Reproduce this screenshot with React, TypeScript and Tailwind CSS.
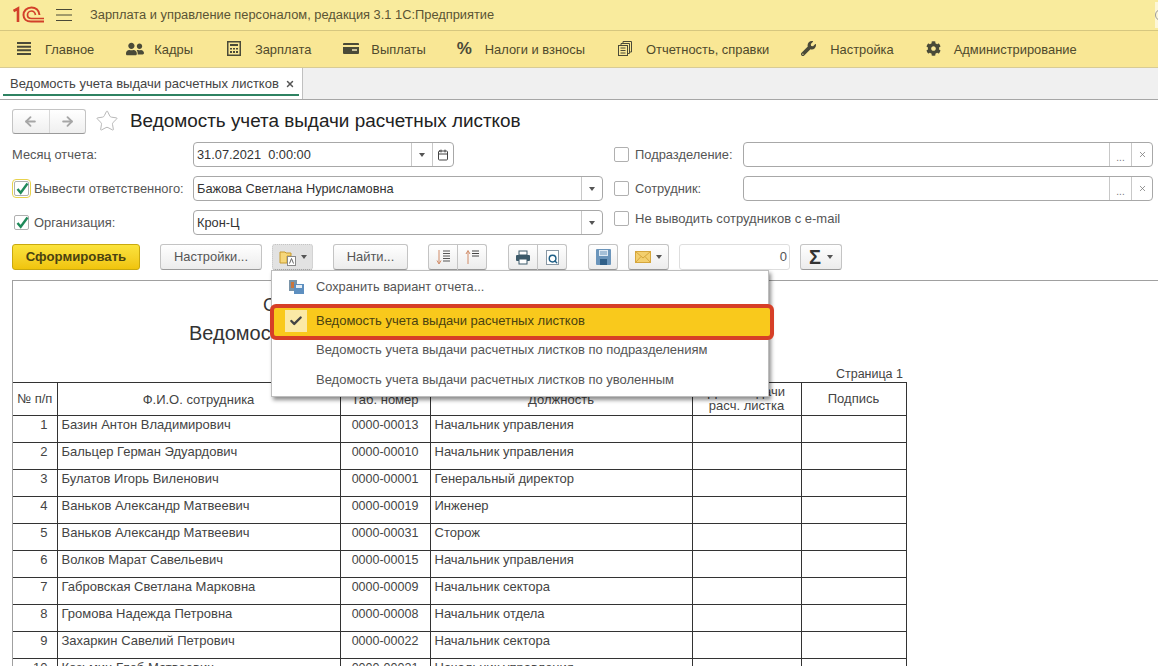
import React from "react";
import { ArrowLeft, ArrowRight, Calendar, Star, Check, X, Search } from "lucide-react";
import { FaUserFriends, FaWrench, FaCog } from "react-icons/fa";

const font = "font-['Liberation_Sans',Arial,sans-serif]";

const Caret = () => <svg width="6" height="4" viewBox="0 0 6 4"><path d="M0 0h6L3 4z" fill="#555" /></svg>;

const navItems: { icon: React.ReactNode; label: string; iconCls: string; itemCls?: string }[] = [
  { icon: <svg width="14" height="13" viewBox="0 0 14 13"><path d="M0 1h14M0 4.700h14M0 8.300h14M0 12h14" stroke="#4a4a38" strokeWidth="2" /></svg>, label: "Главное", iconCls: "w-[28px]" },
  { icon: <FaUserFriends size={18} color="#4a4a38" />, label: "Кадры", iconCls: "w-[28px]", itemCls: "mr-[2px]" },
  { icon: <svg width="14" height="15" viewBox="0 0 14 15"><rect x=".75" y=".75" width="12.500" height="13.500" fill="none" stroke="#4a4a38" strokeWidth="1.500" /><rect x="3" y="3" width="8" height="2" fill="#4a4a38" /><path d="M3 7h2v1.500H3zM6 7h2v1.500H6zM9 7h2v1.500H9zM3 10h2v2H3zM6 10h2v2H6zM9 10h2v2H9z" fill="#4a4a38" /></svg>, label: "Зарплата", iconCls: "w-[28px]" },
  { icon: <svg width="16" height="11" viewBox="0 0 16 11"><rect width="16" height="11" rx="1" fill="#4a4a38" /><rect y="2" width="16" height="2" fill="#f9e795" /><rect x="9" y="6" width="5" height="2" fill="#c8c09a" /></svg>, label: "Выплаты", iconCls: "w-[28px]", itemCls: "mr-[-1px]" },
  { icon: <span className="text-[17px] font-bold text-[#4a4a38]">%</span>, label: "Налоги и взносы", iconCls: "w-[28px]", itemCls: "mr-[1px]" },
  { icon: <svg width="14" height="15" viewBox="0 0 14 15" fill="none" stroke="#4a4a38"><path d="M5 2.500V.5h8.500v10.500H11.500" /><path d="M3 4.500V2.500h8.500v10H9.500" /><rect x=".5" y="4.500" width="9" height="10" /><path d="M2.500 7h5M2.500 9.500h5M2.500 12h5" /></svg>, label: "Отчетность, справки", iconCls: "w-[28px]" },
  { icon: <FaWrench size={15} color="#4a4a38" />, label: "Настройка", iconCls: "w-[29px]" },
  { icon: <FaCog size={15} color="#4a4a38" />, label: "Администрирование", iconCls: "w-[28px]" },
];

const rows = [
  ["1", "Базин Антон Владимирович", "0000-00013", "Начальник управления"],
  ["2", "Бальцер Герман Эдуардович", "0000-00010", "Начальник управления"],
  ["3", "Булатов Игорь Виленович", "0000-00001", "Генеральный директор"],
  ["4", "Ваньков Александр Матвеевич", "0000-00019", "Инженер"],
  ["5", "Ваньков Александр Матвеевич", "0000-00031", "Сторож"],
  ["6", "Волков Марат Савельевич", "0000-00015", "Начальник управления"],
  ["7", "Габровская Светлана Марковна", "0000-00009", "Начальник сектора"],
  ["8", "Громова Надежда Петровна", "0000-00008", "Начальник отдела"],
  ["9", "Захаркин Савелий Петрович", "0000-00022", "Начальник сектора"],
  ["10", "Козьмин Глеб Матвеевич", "0000-00021", "Начальник управления"],
];

const Btn = ({ className = "", children }: { className?: string; children?: React.ReactNode }) => (
  <div className={`h-[26px] flex items-center justify-center rounded-[3px] border border-[#c4c4c4] border-b-[#9a9a9a] bg-gradient-to-b from-white to-[#ececec] text-[#555] ${className}`}>{children}</div>
);

const Box = ({ on, focus }: { on?: boolean; focus?: boolean }) => (
  <div className={`w-[15px] h-[15px] rounded-[2px] border border-[#b0b0b0] bg-white relative shrink-0 ${focus ? "outline outline-1 outline-offset-1 outline-[#e8d24c]" : ""}`}>
    {on && <svg className="absolute left-0 -top-[1px]" width="15" height="15" viewBox="0 0 15 15"><path d="M2.500 8l3.200 3.800L12.500 2.500" stroke="#1f8a5a" strokeWidth="2.400" fill="none" /></svg>}
  </div>
);

const Field = ({ className = "", value, children }: { className?: string; value?: string; children?: React.ReactNode }) => (
  <div className={`h-[25px] flex items-stretch rounded-[4px] border border-[#a8a8a8] bg-white ${className}`}>
    <div className="flex-1 pl-[3px] pt-[1px] flex items-center whitespace-pre text-[#333] text-[12.8px]">{value}</div>
    {children}
  </div>
);
const Addon = ({ className = "w-[21px]", children }: { className?: string; children?: React.ReactNode }) => (
  <div className={`border-l border-[#c8c8c8] flex items-center justify-center text-[#777] ${className}`}>{children}</div>
);

export default function App() {
  return (
    <div className={`${font} relative w-[1158px] h-[666px] overflow-hidden bg-white text-[12px] text-[#444]`}>
      {/* Title bar */}
      <div className="h-[31px] bg-[#f9eb9d] border-b border-[#d6c77f] flex items-center">
        <svg className="ml-[13px]" width="31" height="18" viewBox="0 0 31 18">
          <path d="M.5 5L5 2.500V16" stroke="#d2402a" strokeWidth="2.600" fill="none" />
          <path d="M26.500 9C26 4 22.500 1.500 18.500 1.500 13.500 1.500 10.500 5 10.500 9c0 4 3 6.500 7.500 6.500h13" stroke="#d2402a" strokeWidth="2" fill="none" />
          <path d="M22.500 9c-.5-2.500-2-4-4-4-2.500 0-4 2-4 4s1.500 3.500 4 3.500h12.500" stroke="#d2402a" strokeWidth="1.700" fill="none" />
        </svg>
        <svg className="ml-[12px]" width="16" height="12" viewBox="0 0 16 12"><path d="M0 .5h16M0 6h16M0 11.500h16" stroke="#4a4a38" strokeWidth="1" /></svg>
        <div className="ml-[18px] text-[#5a5434] text-[12.85px]">Зарплата и управление персоналом, редакция 3.1 1С:Предприятие</div>
        <div className="ml-auto w-[3px] h-[26px] bg-[#fdf7d8] flex items-center overflow-hidden"><div className="w-[12px] h-[12px] shrink-0 rounded-full border border-[#999]" /></div>
      </div>
      {/* Section nav */}
      <div className="h-[37px] bg-[#f9e795] border-b border-[#d8cb95] flex items-center pl-[17px] gap-[32px]">
        {navItems.map((n) => (
          <div key={n.label} className={`flex items-center text-[#4f4a2c] text-[12.9px] ${n.itemCls ?? ""}`}>
            <div className={`flex items-center ${n.iconCls}`}>{n.icon}</div>
            <span className="pt-[1px]">{n.label}</span>
          </div>
        ))}
      </div>
      {/* Tabs */}
      <div className="h-[32px] bg-[#f0f0f0] border-b border-[#a6a6a6] flex">
        <div className="w-[303px] bg-white border-r border-[#c0c0c0] relative flex items-center pl-[10px] text-[#444] text-[13px]">
          Ведомость учета выдачи расчетных листков
          <X size={10} strokeWidth={3.5} className="ml-[6px] text-[#555]" />
          <div className="absolute left-[3px] right-[3px] bottom-[3px] h-[2px] bg-[#2e8262]" />
        </div>
      </div>
      {/* Header */}
      <div className="h-[42px] flex items-center pl-[12px]">
        <div className="w-[74px] h-[25px] rounded-[3px] border border-[#c4c4c4] border-b-[#9a9a9a] bg-gradient-to-b from-white to-[#efefef] flex">
          <div className="flex-1 flex items-center justify-center border-r border-[#d8d8d8]"><ArrowLeft size={15} strokeWidth={3} className="text-[#a6a6a6]" /></div>
          <div className="flex-1 flex items-center justify-center"><ArrowRight size={15} strokeWidth={3} className="text-[#a6a6a6]" /></div>
        </div>
        <Star size={24} strokeWidth={1} className="ml-[9px] text-[#b8b8b8]" />
        <div className="ml-[11px] text-[18.9px] text-[#222]">Ведомость учета выдачи расчетных листков</div>
      </div>
      {/* Form */}
      <div className="pl-[12px] flex flex-col gap-[9px] text-[12.9px] text-[#555]">
        <div className="h-[25px] flex items-center">
          <div className="w-[181px] pt-[1px]">Месяц отчета:</div>
          <Field className="w-[261px]" value="31.07.2021  0:00:00">
            <Addon><Caret /></Addon>
            <Addon><Calendar size={12} className="text-[#444]" /></Addon>
          </Field>
          <div className="ml-[160px] flex items-center gap-[6px] w-[129px]"><Box /><span className="pt-[1px]">Подразделение:</span></div>
          <Field className="w-[410px]">
            <Addon className="w-[22px]"><span className="text-[10px] pt-[5px]">...</span></Addon>
            <Addon className="w-[21px]"><X size={9} /></Addon>
          </Field>
        </div>
        <div className="h-[25px] flex items-center">
          <div className="w-[181px] flex items-center pl-[2px] gap-[5px]"><Box on focus /><span className="pt-[1px]">Вывести ответственного:</span></div>
          <Field className="w-[410px]" value="Бажова Светлана Нурисламовна"><Addon><Caret /></Addon></Field>
          <div className="ml-[11px] flex items-center gap-[6px] w-[129px]"><Box /><span className="pt-[1px]">Сотрудник:</span></div>
          <Field className="w-[410px]">
            <Addon className="w-[22px]"><span className="text-[10px] pt-[5px]">...</span></Addon>
            <Addon className="w-[21px]"><X size={9} /></Addon>
          </Field>
        </div>
        <div className="h-[25px] flex items-center">
          <div className="w-[181px] flex items-center pl-[2px] gap-[5px]"><Box on /><span className="pt-[1px]">Организация:</span></div>
          <Field className="w-[410px]" value="Крон-Ц"><Addon><Caret /></Addon></Field>
          <div className="ml-[11px] flex items-center gap-[6px] pb-[8px] text-[13px]"><Box /><span>Не выводить сотрудников с e-mail</span></div>
        </div>
      </div>
      {/* Toolbar */}
      <div className="mt-[9px] h-[26px] pl-[12px] flex items-center text-[12.9px]">
        <div className="w-[128px] h-[26px] rounded-[3px] border border-[#c9a90f] bg-gradient-to-b from-[#fbe33c] to-[#f0c40a] flex items-center justify-center font-bold text-[#4a4210] text-[13.200px]">Сформировать</div>
        <Btn className="w-[102px] ml-[20px]">Настройки...</Btn>
        <Btn className="w-[41px] ml-[10px] gap-[3px] !bg-none bg-[#e2e2e2] border-dotted border-[#333]">
          <svg width="19" height="17" viewBox="0 0 19 17"><path d="M1 3h5l1 1h5v3H8v7H1z" fill="#f6d77a" stroke="#c79a2e" /><rect x="8.500" y="7.500" width="8" height="9" fill="#fff" stroke="#888" /><path d="M10.500 14.500l2-5 2 5" stroke="#666" fill="none" /></svg>
          <Caret />
        </Btn>
        <Btn className="w-[75px] ml-[20px]">Найти...</Btn>
        <div className="ml-[20px] flex">
          <Btn className="w-[30px] rounded-r-none">
            <svg width="15" height="16" viewBox="0 0 15 16"><path d="M3 1v13" stroke="#d08a66" /><path d="M1 11.500L3 15l2-3.500" stroke="#d08a66" fill="none" /><path d="M7 2h7M7 4.500h7M7 7h7M7 9.500h7M7 12h7" stroke="#555" /></svg>
          </Btn>
          <Btn className="w-[29px] rounded-l-none border-l-0">
            <svg width="15" height="16" viewBox="0 0 15 16"><path d="M3 15V3" stroke="#d08a66" /><path d="M1 5l2-3.500L5 5" stroke="#d08a66" fill="none" /><path d="M7 2h7M7 4.500h7M7 7h7" stroke="#444" /></svg>
          </Btn>
        </div>
        <div className="ml-[21px] flex">
          <Btn className="w-[30px] rounded-r-none">
            <svg width="16" height="15" viewBox="0 0 16 15"><rect x="4" y="1" width="8" height="4" fill="#fff" stroke="#3c5a6a" /><rect x="1" y="5" width="14" height="6" rx="1" fill="#3c5a6a" /><rect x="4" y="9" width="8" height="5" fill="#fff" stroke="#3c5a6a" /></svg>
          </Btn>
          <Btn className="w-[29px] rounded-l-none border-l-0">
            <div className="relative w-[13px] h-[15px] border border-[#8a98a4] bg-white"><Search size={10} strokeWidth={3.5} className="absolute left-[1px] top-[3px] text-[#1f5f86]" /></div>
          </Btn>
        </div>
        <Btn className="w-[30px] ml-[21px]">
          <svg width="15" height="16" viewBox="0 0 15 16"><rect width="15" height="16" rx="1" fill="#6b95bb" /><rect x="3" y="1" width="9" height="6" fill="#dfeaf4" /><path d="M4 3h7M4 5h7" stroke="#6b95bb" /><rect x="4" y="10" width="7" height="6" fill="#2f5f88" /></svg>
        </Btn>
        <Btn className="w-[41px] ml-[10px] gap-[5px]">
          <svg width="16" height="12" viewBox="0 0 16 12"><rect x=".5" y=".5" width="15" height="11" fill="#f3cf6e" stroke="#d5a63c" /><path d="M.5.500L8 7l7.500-6.500M.5 11.500L6 5.500M15.500 11.500L10 5.500" stroke="#d5a63c" fill="none" /></svg>
          <Caret />
        </Btn>
        <div className="w-[111px] h-[26px] ml-[10px] rounded-[3px] border border-[#dedede] flex items-center justify-end pr-[2px] text-[#555] text-[13px]">0</div>
        <Btn className="w-[42px] ml-[10px] gap-[6px]"><span className="text-[#333] text-[20px] font-bold leading-none">Σ</span><Caret /></Btn>
      </div>
      {/* Report */}
      <div className="mt-[10px] ml-[12px] h-[400px] border-t border-l border-[#a0a0a0] text-[#333]">
        <div className="h-[101px] w-[893px] relative text-[#333]">
          <div className="h-[40px] pl-[250px] pt-[11px] text-[18px]">Сформирована</div>
          <div className="pl-[176px] -mt-[3px] text-[20px]">Ведомость учета выдачи расчетных листков</div>
          <div className="absolute right-[3px] -bottom-[2px] text-[12.500px] text-[#444]">Страница 1</div>
        </div>
        <table className="border-collapse table-fixed w-[893px] text-[13px] text-[#444]">
          <colgroup>
            <col className="w-[44px]" /><col className="w-[283px]" /><col className="w-[90px]" /><col className="w-[262px]" /><col className="w-[109px]" /><col className="w-[105px]" />
          </colgroup>
          <thead>
            <tr className="h-[33px] border-t border-b border-[#333]">
              <th className="font-normal border-r border-[#333]">№ п/п</th>
              <th className="font-normal border-r border-[#333] pt-[2px]">Ф.И.О. сотрудника</th>
              <th className="font-normal border-r border-[#333] pt-[2px]">Таб. номер</th>
              <th className="font-normal border-r border-[#333] pt-[2px]">Должность</th>
              <th className="font-normal border-r border-[#333] leading-[14px]">Дата выдачи<br />расч. листка</th>
              <th className="font-normal border-r border-[#333]">Подпись</th>
            </tr>
          </thead>
          <tbody>
            {rows.map((r) => (
              <tr key={r[0]} className="h-[27px] border-b border-[#333]">
                <td className="border-r border-[#333] text-right pr-[9px] align-top leading-[17px]">{r[0]}</td>
                <td className="border-r border-[#333] pl-[4px] align-top leading-[17px]">{r[1]}</td>
                <td className="border-r border-[#333] text-center align-top leading-[18px] text-[12.500px]">{r[2]}</td>
                <td className="border-r border-[#333] pl-[4px] align-top leading-[17px]">{r[3]}</td>
                <td className="border-r border-[#333]" />
                <td className="border-r border-[#333]" />
              </tr>
            ))}
          </tbody>
        </table>
      </div>
      {/* Dropdown menu */}
      <div className="absolute left-[271px] top-[270px] w-[498px] h-[127px] bg-white border border-[#bdbdbd] shadow-[2px_3px_4px_rgba(0,0,0,0.45)] text-[13px] text-[#555]">
        <div className="h-[33px] pb-[2px] flex items-center">
          <div className="w-[44px] pl-[16px]">
            <svg width="17" height="16" viewBox="0 0 17 16"><rect x="1" y="1" width="8" height="11" fill="#7a94a8" /><rect x="3" y="3" width="3" height="6" fill="#c9753d" /><rect x="6" y="5" width="10" height="10" fill="#5d8fc0" /><rect x="8" y="6" width="6" height="3" fill="#e4edf5" /></svg>
          </div>
          <span className="text-[12.800px]">Сохранить вариант отчета...</span>
        </div>
        <div className="relative -ml-[2px] w-[504px] h-[36px] rounded-[6px] border-[4px] border-[#d63f27] bg-[#f9c91c] flex items-center text-[#4a4210] pb-[3px]">
          <div className="w-[42px] pl-[11px]">
            <div className="w-[22px] h-[22px] bg-[#fbe9a6] flex items-center justify-center"><Check size={14} strokeWidth={4} className="text-[#444]" /></div>
          </div>
          <span>Ведомость учета выдачи расчетных листков</span>
        </div>
        <div className="h-[20px] mb-[10px] flex items-center pl-[44px]">Ведомость учета выдачи расчетных листков по подразделениям</div>
        <div className="h-[20px] flex items-center pl-[44px]">Ведомость учета выдачи расчетных листков по уволенным</div>
      </div>
    </div>
  );
}
